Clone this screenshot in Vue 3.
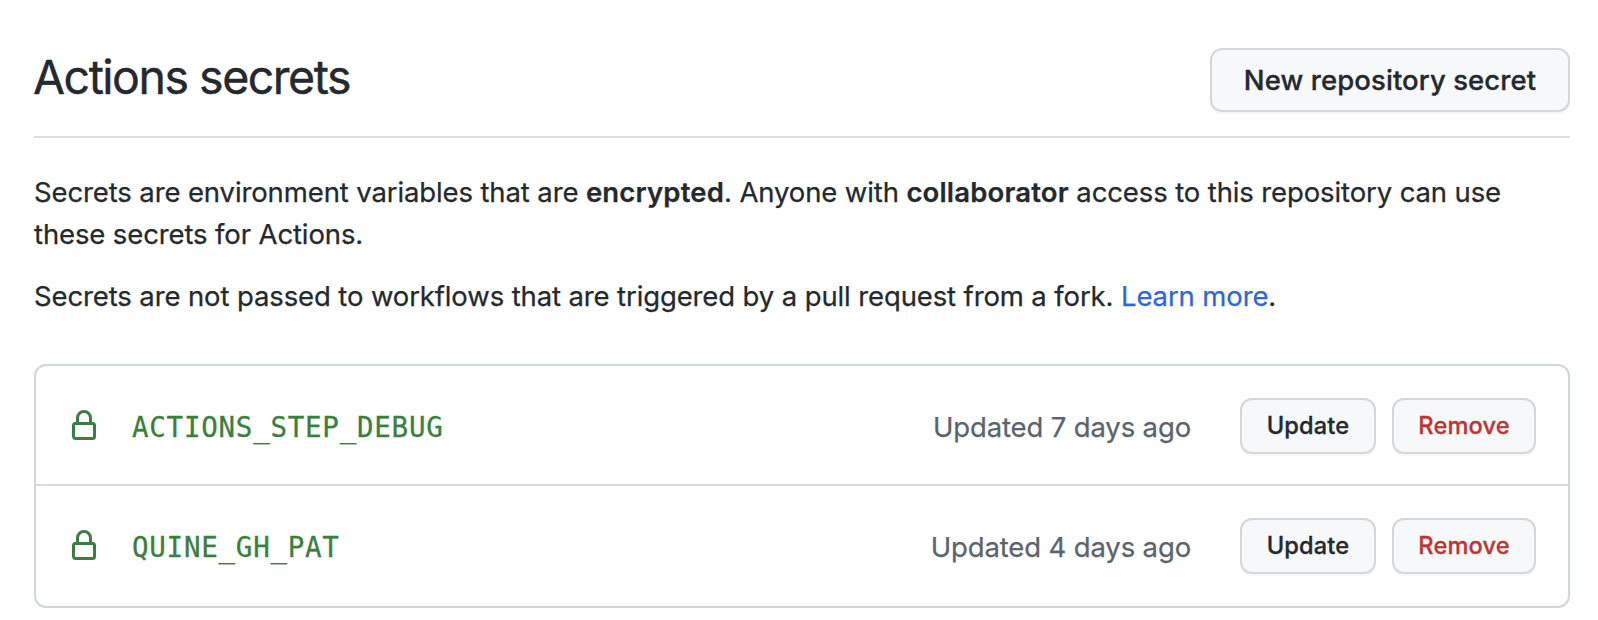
<script setup>
const secrets = [
  { name: 'ACTIONS_STEP_DEBUG', updated: 'Updated 7 days ago' },
  { name: 'QUINE_GH_PAT', updated: 'Updated 4 days ago' },
]
</script>

<template>
  <main class="page">
    <header class="header">
      <h1 class="title">Actions secrets</h1>
      <button class="btn btn-large">New repository secret</button>
    </header>
    <p class="text">
      Secrets are environment variables that are <strong>encrypted</strong>. Anyone with
      <strong>collaborator</strong> access to this repository can use<br />these secrets for Actions.
    </p>
    <p class="text note">
      Secrets are not passed to workflows that are triggered by a pull request from a fork.
      <a class="link">Learn more</a>.
    </p>
    <ul class="box">
      <li v-for="s in secrets" :key="s.name" class="row">
        <svg class="lock" viewBox="0 0 16 16" width="32" height="32" aria-hidden="true">
          <path fill-rule="evenodd" d="M4 4v2h-.25A1.75 1.75 0 002 7.75v5.5c0 .966.784 1.75 1.75 1.75h8.5A1.75 1.75 0 0014 13.25v-5.5A1.75 1.75 0 0012.25 6H12V4a4 4 0 10-8 0zm6.5 2V4a2.5 2.5 0 00-5 0v2h5zM12 7.5h.25a.25.25 0 01.25.25v5.5a.25.25 0 01-.25.25h-8.5a.25.25 0 01-.25-.25v-5.5a.25.25 0 01.25-.25H12z" />
        </svg>
        <code class="name">{{ s.name }}</code>
        <span class="updated">{{ s.updated }}</span>
        <button class="btn btn-update">Update</button>
        <button class="btn btn-remove">Remove</button>
      </li>
    </ul>
  </main>
</template>

<style>
body {
  margin: 0;
  background: #fff;
}
</style>

<style scoped>
.page {
  box-sizing: border-box;
  height: 620px;
  padding: 48px 28px 0 34px;
  font-family: Inter, "Liberation Sans", sans-serif;
  font-size: 27.5px;
  color: #24292e;
  overflow: hidden;
}
.header {
  display: flex;
  box-sizing: border-box;
  height: 90px;
  justify-content: space-between;
  align-items: flex-start;
  border-bottom: 2px solid #d8dee4;
}
.title {
  margin: -7px 0 0 -1px;
  font-size: 46.5px;
  line-height: 72px;
  font-weight: 400;
  letter-spacing: -1.5px;
  white-space: nowrap;
  -webkit-text-stroke: 0.4px currentColor;
}
.text {
  margin: 33px 0 0;
  line-height: 42px;
  letter-spacing: -0.12px;
  white-space: nowrap;
  -webkit-text-stroke: 0.25px currentColor;
}
.text strong {
  font-weight: 600;
  letter-spacing: 0.16px;
}
.note {
  margin-top: 20px;
}
.link {
  color: #2f67d8;
}
.box {
  box-sizing: border-box;
  height: 244px;
  margin: 47px 0 0;
  padding: 0;
  list-style: none;
  border: 2px solid #d0d6de;
  border-radius: 12px;
}
.row {
  display: flex;
  align-items: center;
  padding: 32px 32px 30px;
}
.row + .row {
  padding-bottom: 32px;
  border-top: 2px solid #d8dce2;
}
.lock {
  flex: none;
  fill: #3b7f3f;
}
.name {
  margin-left: 32px;
  padding-top: 2px;
  font-family: "DejaVu Sans Mono", monospace;
  font-size: 27.5px;
  line-height: 42px;
  letter-spacing: 0.75px;
  color: #3b7f3f;
  -webkit-text-stroke: 0.3px currentColor;
}
.updated {
  margin-left: auto;
  margin-right: 49px;
  padding-top: 2px;
  line-height: 42px;
  letter-spacing: -0.14px;
  color: #5b636d;
  white-space: nowrap;
  -webkit-text-stroke: 0.25px currentColor;
}
.btn {
  flex: none;
  box-sizing: border-box;
  height: 56px;
  padding: 0 0 1px;
  border: 2px solid #d5d8da;
  border-radius: 12px;
  background: #f6f8fa;
  box-shadow: 0 2px 0 rgba(27, 31, 35, 0.04);
  color: #24292e;
  font-family: inherit;
  font-size: 23.6px;
  font-weight: 500;
  letter-spacing: 0.15px;
  white-space: nowrap;
  -webkit-text-stroke: 0.3px currentColor;
}
.btn-large {
  width: 360px;
  height: 64px;
  font-size: 27.5px;
  letter-spacing: 0.08px;
}
.btn-update {
  width: 136px;
}
.btn-remove {
  width: 144px;
  margin-left: 16px;
  color: #bf3434;
}
</style>
